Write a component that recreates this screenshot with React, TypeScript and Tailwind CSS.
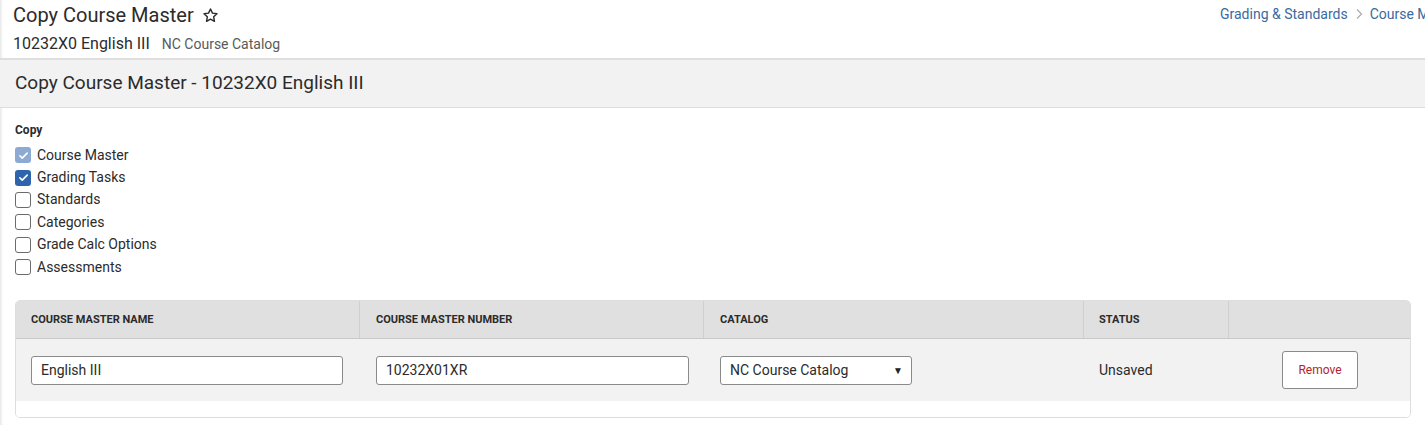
import React from "react";

function Check({ state }: { state: "on" | "dis" | "off" }) {
  if (state === "off")
    return <span className="w-4 h-4 rounded-[3px] border border-[#6b6b6b] bg-white shrink-0" />;
  return (
    <span
      className={`w-4 h-4 rounded-[3px] shrink-0 flex items-center justify-center ${
        state === "on" ? "bg-[#2d64ad]" : "bg-[#8daad3]"
      }`}
    >
      <svg width="11" height="11" viewBox="0 0 12 12" fill="none">
        <path d="M2 6.3l2.6 2.6L10 3.5" stroke="white" strokeWidth="1.8" strokeLinecap="round" strokeLinejoin="round" />
      </svg>
    </span>
  );
}

export default function App() {
  const items: [string, "on" | "dis" | "off"][] = [
    ["Course Master", "dis"],
    ["Grading Tasks", "on"],
    ["Standards", "off"],
    ["Categories", "off"],
    ["Grade Calc Options", "off"],
    ["Assessments", "off"],
  ];
  return (
    <div
      className="w-full h-[425px] overflow-hidden bg-white text-[#2b2b2b] shadow-[inset_3px_0_3px_-2px_rgba(0,0,0,0.12)]"
      style={{ fontFamily: "Roboto, 'Noto Sans', sans-serif" }}
    >
      <div className="flex h-[58px]">
        <div className="pl-[13px] pt-[2px]">
          <div className="flex items-center h-[26px]">
            <span className="text-[20px] leading-[26px]">Copy Course Master</span>
            <svg className="ml-[8px]" width="17" height="17" viewBox="0 0 24 24" fill="none" stroke="#2b2b2b" strokeWidth="2" strokeLinejoin="round">
              <path d="M12 2.8l2.8 5.8 6.3.9-4.6 4.4 1.1 6.3L12 17.2l-5.6 3 1.1-6.3-4.6-4.4 6.3-.9z" />
            </svg>
          </div>
          <div className="flex items-baseline mt-[3px]">
            <span className="text-[16px] leading-[26px]">10232X0 English III</span>
            <span className="text-[14px] text-[#5a5a5a] ml-[12px]">NC Course Catalog</span>
          </div>
        </div>
        <div className="ml-auto w-[205px] shrink-0 overflow-hidden whitespace-nowrap text-[14px] text-[#3a6aa0] flex items-center h-[20px] mt-[4px]">
          <span className="shrink-0">Grading &amp; Standards</span>
          <svg className="ml-[7px] mr-[7px] shrink-0" width="8" height="12" viewBox="0 0 8 12" fill="none" stroke="#b0b0b0" strokeWidth="1.4">
            <path d="M2 1.5l4.5 4.5L2 10.5" />
          </svg>
          <span className="shrink-0">Course Master</span>
        </div>
      </div>
      <div className="h-[50px] bg-[#f2f2f2] border-t-2 border-b border-[#dedede] flex items-center pl-[15px]">
        <span className="text-[19px]">Copy Course Master - 10232X0 English III</span>
      </div>
      <div className="pl-[15px] pt-[14px]">
        <div className="text-[12px] font-bold leading-[16px]">Copy</div>
        <div className="mt-[6px] flex flex-col">
          {items.map(([l, s]) => (
            <label key={l} className="flex items-center gap-[6px] h-[22.4px] text-[14px]">
              <Check state={s} />
              <span>{l}</span>
            </label>
          ))}
        </div>
      </div>
      <div className="mx-[15px] mt-[22px] w-[1396px] border border-[#dddddd] rounded-[5px] overflow-hidden">
        <div className="flex h-[38px] bg-[#e0e0e0] border-b border-[#c9c9c9] text-[11px] font-bold uppercase text-[#2b2b2b]">
          <div className="w-[344px] pl-[15px] flex items-center border-r border-[#cfcfcf]">Course Master Name</div>
          <div className="w-[344px] pl-[16px] flex items-center border-r border-[#cfcfcf]">Course Master Number</div>
          <div className="w-[380px] pl-[16px] flex items-center border-r border-[#cfcfcf]">Catalog</div>
          <div className="w-[145px] pl-[15px] flex items-center border-r border-[#cfcfcf]">Status</div>
          <div className="flex-1" />
        </div>
        <div className="flex h-[62px] bg-[#f2f2f2] items-center text-[14px]">
          <div className="w-[344px] pl-[15px]">
            <div className="w-[312px] h-[29px] bg-white border border-[#8a8a8a] rounded-[3px] flex items-center pl-[9px]">English III</div>
          </div>
          <div className="w-[344px] pl-[16px]">
            <div className="w-[313px] h-[29px] bg-white border border-[#8a8a8a] rounded-[3px] flex items-center pl-[9px]">10232X01XR</div>
          </div>
          <div className="w-[380px] pl-[16px]">
            <div className="w-[192px] h-[29px] bg-white border border-[#8a8a8a] rounded-[3px] flex items-center pl-[9px] pr-[8px]">
              <span>NC Course Catalog</span>
              <span className="ml-auto text-[10px] text-[#222]">▼</span>
            </div>
          </div>
          <div className="w-[145px] pl-[15px]">Unsaved</div>
          <div className="flex-1 pl-[53px]">
            <button className="w-[76px] h-[38px] bg-white border border-[#8a8a8a] rounded-[3px] text-[12px] text-[#b3232e]">Remove</button>
          </div>
        </div>
        <div className="h-[16px] bg-white" />
      </div>
    </div>
  );
}
